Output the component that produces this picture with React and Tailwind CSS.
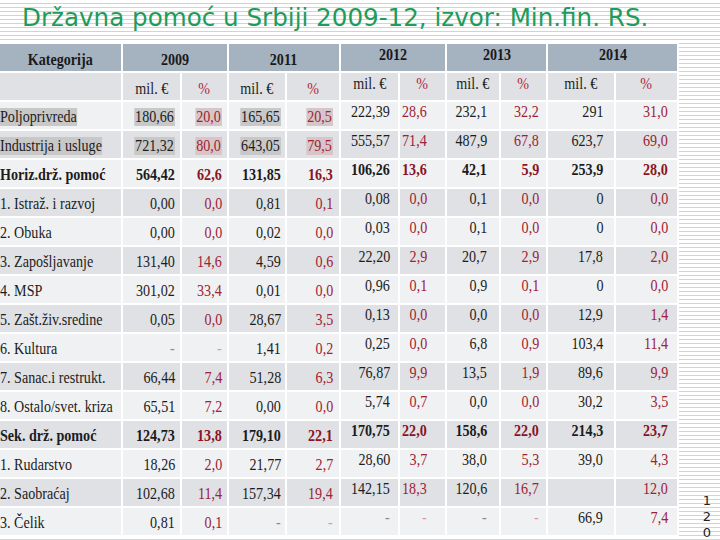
import React from "react";

const rows = [
  { label: "Poljoprivreda", hl: true, v: ["180,66", "20,0", "165,65", "20,5", "222,39", "28,6", "232,1", "32,2", "291", "31,0"] },
  { label: "Industrija i usluge", hl: true, v: ["721,32", "80,0", "643,05", "79,5", "555,57", "71,4", "487,9", "67,8", "623,7", "69,0"] },
  { label: "Horiz.drž. pomoć", bold: true, v: ["564,42", "62,6", "131,85", "16,3", "106,26", "13,6", "42,1", "5,9", "253,9", "28,0"] },
  { label: "1. Istraž. i razvoj", v: ["0,00", "0,0", "0,81", "0,1", "0,08", "0,0", "0,1", "0,0", "0", "0,0"] },
  { label: "2. Obuka", v: ["0,00", "0,0", "0,02", "0,0", "0,03", "0,0", "0,1", "0,0", "0", "0,0"] },
  { label: "3. Zapošljavanje", v: ["131,40", "14,6", "4,59", "0,6", "22,20", "2,9", "20,7", "2,9", "17,8", "2,0"] },
  { label: "4. MSP", v: ["301,02", "33,4", "0,01", "0,0", "0,96", "0,1", "0,9", "0,1", "0", "0,0"] },
  { label: "5. Zašt.živ.sredine", v: ["0,05", "0,0", "28,67", "3,5", "0,13", "0,0", "0,0", "0,0", "12,9", "1,4"] },
  { label: "6. Kultura", v: ["-", "-", "1,41", "0,2", "0,25", "0,0", "6,8", "0,9", "103,4", "11,4"] },
  { label: "7. Sanac.i restrukt.", v: ["66,44", "7,4", "51,28", "6,3", "76,87", "9,9", "13,5", "1,9", "89,6", "9,9"] },
  { label: "8. Ostalo/svet. kriza", v: ["65,51", "7,2", "0,00", "0,0", "5,74", "0,7", "0,0", "0,0", "30,2", "3,5"] },
  { label: "Sek. drž. pomoć", bold: true, v: ["124,73", "13,8", "179,10", "22,1", "170,75", "22,0", "158,6", "22,0", "214,3", "23,7"] },
  { label: "1. Rudarstvo", v: ["18,26", "2,0", "21,77", "2,7", "28,60", "3,7", "38,0", "5,3", "39,0", "4,3"] },
  { label: "2. Saobraćaj", v: ["102,68", "11,4", "157,34", "19,4", "142,15", "18,3", "120,6", "16,7", "", "12,0"] },
  { label: "3. Čelik", v: ["0,81", "0,1", "-", "-", "-", "-", "-", "-", "66,9", "7,4"] },
];

const PR = [
  "pr-[5px]",
  "pr-[5px]",
  "pr-[4px]",
  "pr-[6px]",
  "pr-[8px]",
  "pr-[18px]",
  "pr-[12px]",
  "pr-[7px]",
  "pr-[11px]",
  "pr-[9px]",
];

function ValueCell({ value, i, bg, bold, hl }) {
  const isPct = i % 2 === 1;
  const left = i < 4;
  const isDash = value === "-";
  let color = isPct ? (bold ? "text-[#8a1424]" : "text-[#9e2233]") : "text-[#1c1c1c]";
  if (isDash) color = isPct ? "text-[#d99aa3]" : "text-[#8a8a8a]";
  const hlBg = hl && left ? (isPct ? "bg-[#d6c6c8] px-[1px]" : "bg-[#c8c8c8] px-[1px]") : "";
  return (
    <div
      className={`${bg} flex items-center justify-end ${PR[i]} ${left ? "pt-[3px]" : "pb-[7px]"} ${color} ${bold ? "font-bold" : ""}`}
    >
      <span className={`inline-block scale-x-[0.83] origin-right leading-[18px] whitespace-nowrap ${hlBg}`}>{value}</span>
    </div>
  );
}

function Head({ children, span, left }) {
  return (
    <div
      className={`${span ? "col-span-2" : ""} bg-[#a5b3c0] flex items-center justify-center ${left ? "pt-[3px]" : "pb-[7px]"} font-bold text-[#1a1a1a]`}
    >
      <span className="inline-block scale-x-[0.83] whitespace-nowrap">{children}</span>
    </div>
  );
}

export default function App() {
  return (
    <div className="relative w-[720px] h-[540px] overflow-hidden bg-white bg-[repeating-linear-gradient(to_bottom,#ffffff_0px,#ffffff_3px,#d3d3d3_3px,#d3d3d3_4px)]">
      <div className="h-[42px] pl-[22px] pt-[3px] text-[24.6px] leading-[30px] text-[#1f9b5c] font-['DejaVu_Sans',sans-serif] whitespace-nowrap">
        Državna pomoć u Srbiji 2009-12, izvor: Min.fin. RS.
      </div>
      <div className="w-[679px] bg-white pt-[2px] pr-[2px] pb-[2px] font-['Liberation_Serif',serif] text-[17px] leading-none">
        <div className="grid grid-cols-[121px_57px_45px_56px_52px_57px_45px_52px_45px_66px_61px] auto-rows-[27px] gap-[2px]">
          <Head left>Kategorija</Head>
          <Head span left>2009</Head>
          <Head span left>2011</Head>
          <Head span>2012</Head>
          <Head span>2013</Head>
          <Head span>2014</Head>
          <div className="bg-[#dfe1e5]"></div>
          {[0, 1, 2, 3, 4, 5, 6, 7, 8, 9].map((i) => (
            <div
              key={i}
              className={`bg-[#dfe1e5] flex items-center justify-center ${i < 4 ? "pt-[3px]" : "pb-[7px]"} ${i % 2 ? "text-[#b0283a]" : "text-[#1c1c1c]"}`}
            >
              <span className="inline-block scale-x-[0.83] whitespace-nowrap">{i % 2 ? "%" : "mil. €"}</span>
            </div>
          ))}
          {rows.map((r, ri) => {
            const bg = ri % 2 === 0 ? "bg-[#f0f1f3]" : "bg-[#dfe1e5]";
            return (
              <React.Fragment key={ri}>
                <div className={`${bg} flex items-center pt-[3px] whitespace-nowrap text-[#1c1c1c] ${r.bold ? "font-bold" : ""}`}>
                  <span className={`inline-block scale-x-[0.83] origin-left leading-[18px] ${r.hl ? "bg-[#c8c8c8]" : ""}`}>{r.label}</span>
                </div>
                {r.v.map((val, i) => (
                  <ValueCell key={i} value={val} i={i} bg={bg} bold={r.bold} hl={r.hl} />
                ))}
              </React.Fragment>
            );
          })}
        </div>
      </div>
      <div className="absolute left-[700px] top-[493px] w-[14px] flex flex-col items-center font-['DejaVu_Sans',sans-serif] text-[13px] leading-[16px] text-[#222]">
        <span>1</span>
        <span>2</span>
        <span>0</span>
      </div>
    </div>
  );
}
